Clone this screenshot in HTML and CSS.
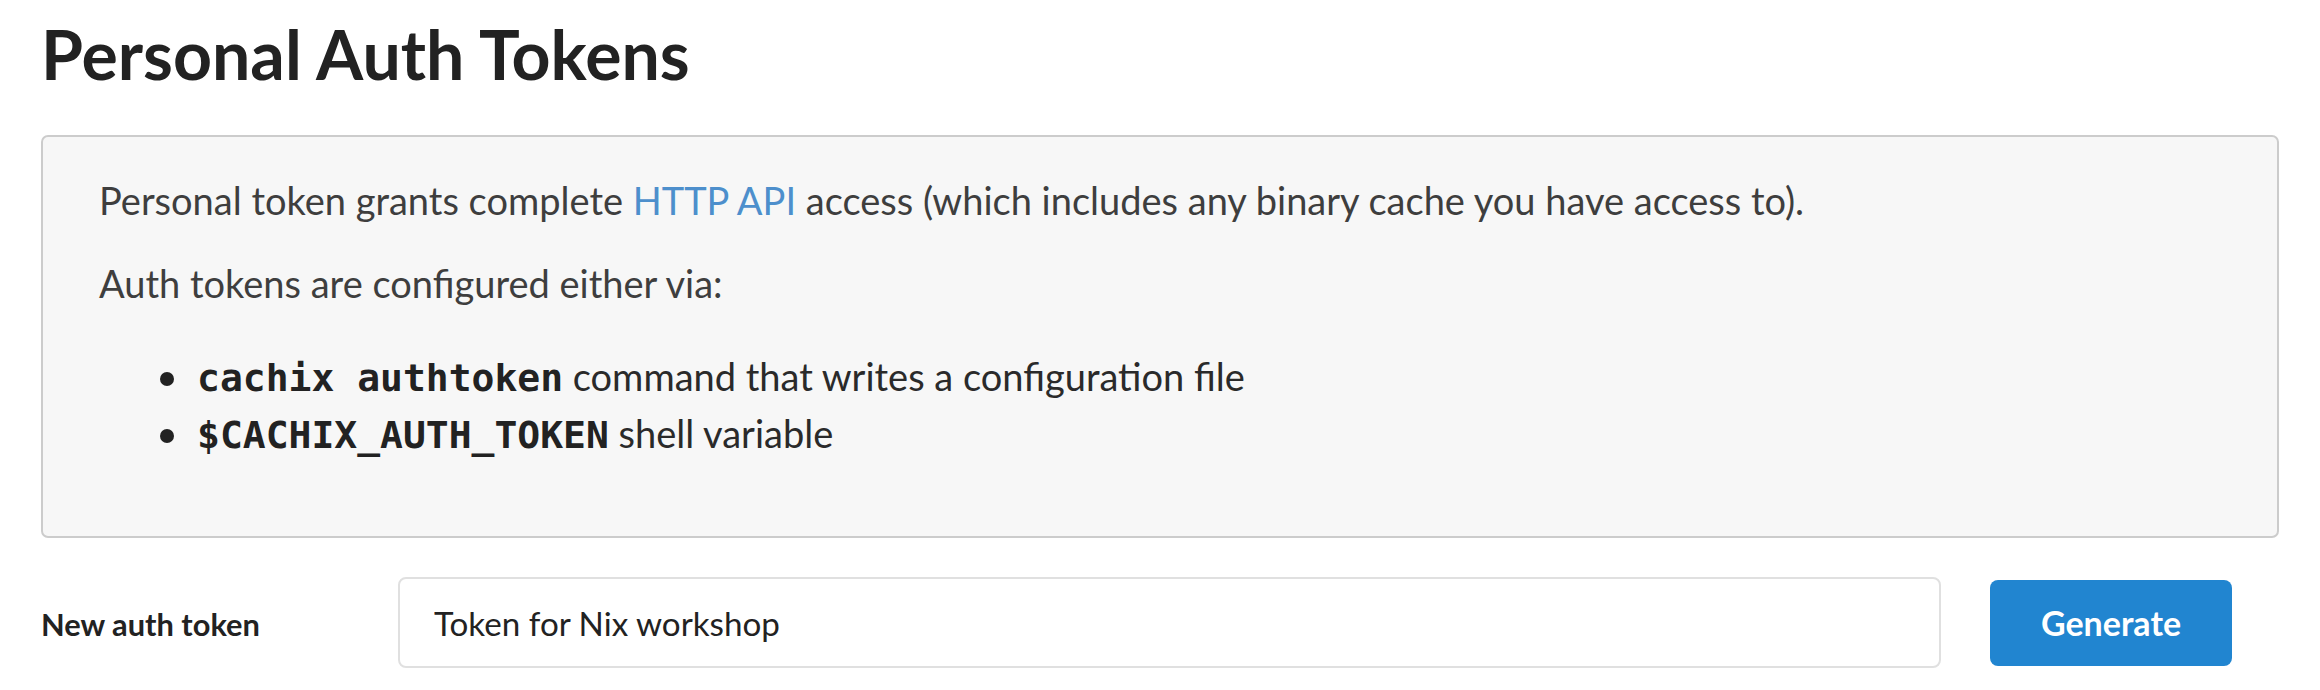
FILE: index.html
```html
<!DOCTYPE html>
<html lang="en">
<head>
<meta charset="utf-8">
<title>Personal Auth Tokens</title>
<link rel="stylesheet" href="styles.css">
</head>
<body>
<div class="page">
  <h1 class="title">Personal Auth Tokens</h1>
  <div class="info">
    <p class="info-text">Personal token grants complete <a class="link" href="#">HTTP API</a> access (which includes any binary cache you have access to).</p>
    <p class="info-text">Auth tokens are configured either via:</p>
    <ul class="info-list">
      <li class="info-item"><code class="code">cachix authtoken</code> command that writes a configuration file</li>
      <li class="info-item"><code class="code">$CACHIX_AUTH_TOKEN</code> shell variable</li>
    </ul>
  </div>
  <form class="token-form">
    <label class="token-label" for="token">New auth token</label>
    <input class="token-input" id="token" type="text" value="Token for Nix workshop">
    <button class="generate" type="button">Generate</button>
  </form>
</div>
</body>
</html>
```

FILE: styles.css
```css
html, body {
  margin: 0;
  padding: 0;
  background: #ffffff;
}

body {
  font-family: Lato, "Noto Sans", sans-serif;
  color: #222222;
}

.page {
  padding: 0 41px;
}

.title {
  margin: 0;
  padding-top: 20px;
  font-size: 68px;
  line-height: 68px;
  font-weight: 700;
  color: #222222;
}

.info {
  margin-top: 47px;
  background: #f7f7f7;
  border: 2px solid #cccccc;
  border-radius: 7px;
  padding: 40px 56px 74px;
  color: #3e3e3e;
  font-size: 38px;
}

.info-text {
  margin: 0 0 37px;
  line-height: 46px;
}

.link {
  color: #4d8fcc;
  text-decoration: none;
}

.info-list {
  list-style: none;
  margin: 42px 0 0;
  padding: 0 0 0 61px;
}

.info-item {
  line-height: 57px;
  color: #2a2a2a;
}

.info-item::before {
  content: "";
  display: inline-block;
  width: 14px;
  height: 14px;
  border-radius: 50%;
  background: #222222;
  margin-right: 23px;
  vertical-align: 5px;
}

.code {
  font-family: "DejaVu Sans Mono", monospace;
  font-weight: 700;
  font-size: 38px;
  line-height: 1;
  color: #222222;
}

.token-form {
  display: flex;
  align-items: center;
  margin-top: 39px;
}

.token-label {
  width: 357px;
  flex: none;
  padding-top: 3px;
  font-size: 30.8px;
  font-weight: 700;
  color: #222222;
}

.token-input {
  width: 1543px;
  height: 91px;
  box-sizing: border-box;
  flex: none;
  border: 2px solid #e0e0e0;
  border-radius: 8px;
  padding: 0 34px;
  font-family: Lato, sans-serif;
  font-size: 33.2px;
  color: #222222;
  background: #ffffff;
  outline: none;
}

.generate {
  margin-left: 49px;
  width: 242px;
  height: 86px;
  flex: none;
  border: none;
  border-radius: 8px;
  background: #2185d0;
  color: #ffffff;
  font-family: Lato, sans-serif;
  font-size: 34px;
  font-weight: 700;
}
```
